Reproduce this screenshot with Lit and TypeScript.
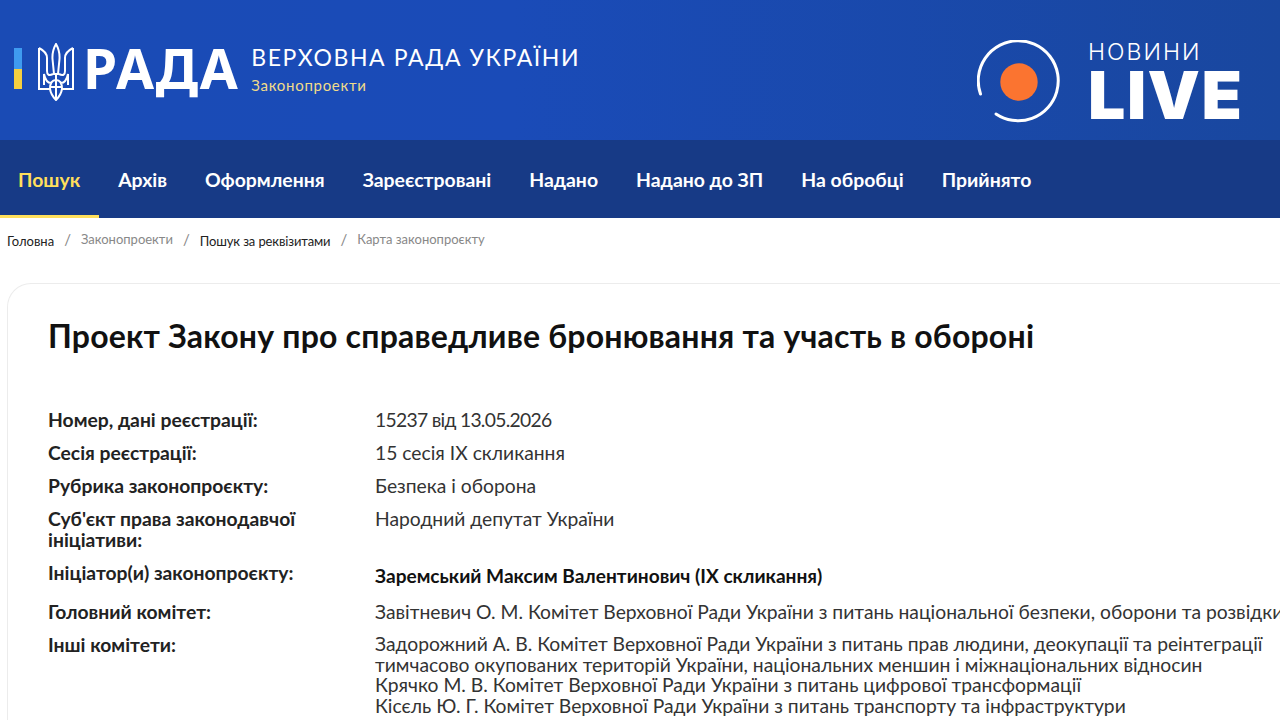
import { LitElement, html, css } from "lit";
import { customElement } from "lit/decorators.js";

const NAV = ["Пошук","Архів","Оформлення","Зареєстровані","Надано","Надано до ЗП","На обробці","Прийнято"];

@customElement("app-root")
export class AppRoot extends LitElement {
  static styles = css`
    :host { display:block; width:1280px; height:720px; overflow:hidden; background:#fff; font-family:"Lato","Noto Sans",sans-serif; color:#222; }
    .head { height:140px; background:linear-gradient(90deg,#1a4bb5,#1a4bb8 40%,#19479f); display:flex; align-items:center; justify-content:space-between; padding:0 38px 0 14px; box-sizing:border-box; }
    .brand { display:flex; align-items:center; }
    .flag { width:8px; height:41px; background:linear-gradient(#3f9bf0 50%,#f5cf3f 50%); margin-right:16px; margin-top:-4px; }
    .trident { margin-right:9px; margin-top:4px; }
    .rada { font:700 55px/1 "Noto Sans",sans-serif; color:#fff; letter-spacing:1.5px; margin-right:12px; margin-top:-6px; }
    .titles { margin-top:-3px; }
    .t1 { font-size:23px; color:#fff; letter-spacing:1.57px; line-height:28px; }
    .t2 { font-size:15px; color:#f0dc8a; letter-spacing:.7px; line-height:18px; margin-top:5px; }
    .live { display:flex; align-items:center; gap:27px; margin-top:24px; }
    .lt { color:#fff; display:flex; flex-direction:column; }
    .lt small { font:300 23px/24px "Inter",sans-serif; letter-spacing:2px; margin-bottom:2px; }
    .lt b { font:900 66px/58px "Inter",sans-serif; letter-spacing:1.5px; margin-right:-1.5px; }
    nav { height:78px; background:#173a86; display:flex; }
    nav a { color:#fff; font-size:19.4px; font-weight:700; padding:0 19px; display:flex; align-items:center; box-sizing:border-box; }
    nav a.on { color:#ffdf5c; border-bottom:3px solid #ffdf5c; padding:3px 19px 0 18px; }
    .crumbs { height:46px; background:#fff; display:flex; align-items:center; padding:0 7px; font-size:13px; color:#222; gap:10px; }
    .crumbs .sep { font-size:15px; }
    .crumbs .m { color:#888; position:relative; top:-2px; }
    .crumbs .tight { letter-spacing:-.12px; }
    .card { margin:19px 0 0 7px; border:1px solid #ececec; border-right:0; border-radius:24px 0 0 0; padding:32px 0 0 40px; height:500px; box-sizing:border-box; width:1400px; }
    h1 { margin:0 0 53px; font-size:32px; font-weight:700; line-height:40px; color:#111; letter-spacing:.2px; }
    .row { display:grid; grid-template-columns:327px 1fr; font-size:19.3px; line-height:21px; margin-bottom:12px; }
    .row .k { font-weight:700; width:290px; }
    .row .v { color:#333; white-space:nowrap; }
    .row .num { letter-spacing:-.7px; }
    .row .init { padding:3px 0; color:#111; font-weight:700; font-size:19.1px; }
    .row .multi { line-height:20.7px; }
  `;
  render() {
    return html`
    <div class="head">
      <div class="brand">
        <div class="flag"></div>
        <svg class="trident" width="36" height="58" viewBox="0 0 36 58" fill="none" stroke="#fff" stroke-width="2">
          <path d="M18 1 Q14 8 14.5 16 L16 31 L20 31 L21.5 16 Q22 8 18 1Z"/>
          <path d="M1 5 L1 46 L12 46 M1 5 Q9 9 9 15 L9 28 Q9 34 15 31"/>
          <path d="M35 5 L35 46 L24 46 M35 5 Q27 9 27 15 L27 28 Q27 34 21 31"/>
          <path d="M12 46 Q12 37 18 37 Q24 37 24 46 Q23 52 18 57 Q13 52 12 46Z M18 31 L18 57 M12 44 L24 44 M6 42 L6 31 Q8 40 13 40 M30 42 L30 31 Q28 40 23 40"/>
        </svg>
        <div class="rada">РАДА</div>
        <div class="titles">
          <div class="t1">ВЕРХОВНА РАДА УКРАЇНИ</div>
          <div class="t2">Законопроекти</div>
        </div>
      </div>
      <div class="live">
        <svg width="84" height="84" viewBox="0 0 84 84" fill="none">
          <path d="M3.5 54 A40 40 0 1 1 19 74" stroke="#fff" stroke-width="3" stroke-linecap="round"/>
          <circle cx="42" cy="42" r="18.7" fill="#fb7430"/>
        </svg>
        <div class="lt"><small>НОВИНИ</small><b>LIVE</b></div>
      </div>
    </div>
    <nav>${NAV.map((n,i)=>html`<a class=${i===0?"on":""}>${n}</a>`)}</nav>
    <div class="crumbs"><span>Головна</span><span class="sep m">/</span><span class="m">Законопроекти</span><span class="sep m">/</span><span class="tight">Пошук за реквізитами</span><span class="sep m">/</span><span class="m">Карта законопроєкту</span></div>
    <div class="card">
      <h1>Проект Закону про справедливе бронювання та участь в обороні</h1>
      <div class="row"><div class="k">Номер, дані реєстрації:</div><div class="v num">15237 від 13.05.2026</div></div>
      <div class="row"><div class="k">Сесія реєстрації:</div><div class="v">15 сесія IX скликання</div></div>
      <div class="row"><div class="k">Рубрика законопроєкту:</div><div class="v">Безпека і оборона</div></div>
      <div class="row"><div class="k">Суб'єкт права законодавчої ініціативи:</div><div class="v">Народний депутат України</div></div>
      <div class="row"><div class="k">Ініціатор(и) законопроєкту:</div><div class="v init">Заремський Максим Валентинович (IX скликання)</div></div>
      <div class="row"><div class="k">Головний комітет:</div><div class="v">Завітневич О. М. Комітет Верховної Ради України з питань національної безпеки, оборони та розвідки</div></div>
      <div class="row"><div class="k">Інші комітети:</div><div class="v multi">Задорожний А. В. Комітет Верховної Ради України з питань прав людини, деокупації та реінтеграції<br>тимчасово окупованих територій України, національних меншин і міжнаціональних відносин<br>Крячко М. В. Комітет Верховної Ради України з питань цифрової трансформації<br>Кісєль Ю. Г. Комітет Верховної Ради України з питань транспорту та інфраструктури</div></div>
    </div>`;
  }
}
